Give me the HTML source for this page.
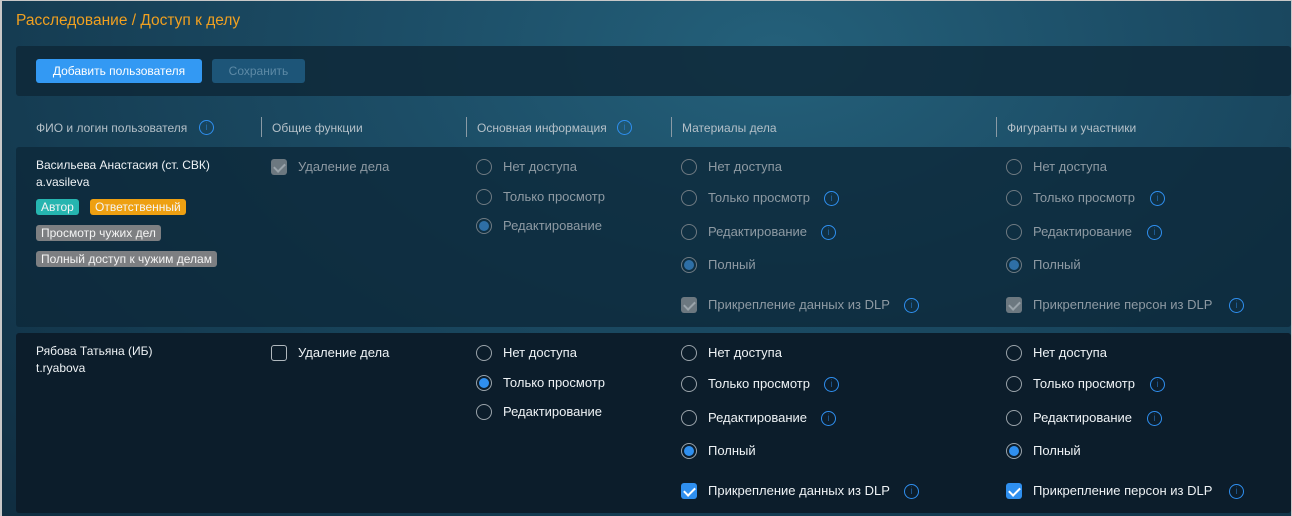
<!DOCTYPE html>
<html><head><meta charset="utf-8"><style>
*{margin:0;padding:0;box-sizing:border-box}
body{width:1292px;height:516px;overflow:hidden;font-family:"Liberation Sans",sans-serif;font-size:13px;position:relative;
background:radial-gradient(ellipse at 60% 10%,#24607a 0%,#1c4d66 35%,#153c52 70%,#102d40 100%);}
.frame{position:absolute;left:0;top:0;width:1292px;height:516px;border:1px solid #c8c8c8;border-bottom:none;border-left:2px solid #c8c8c8;pointer-events:none}
.a{position:absolute;white-space:nowrap}
.panel{position:absolute;left:16px;width:1275px;border-radius:3px}
.t{position:absolute;white-space:nowrap;line-height:16px}
.h{color:#b4c0c8;font-size:12px}
.d{color:#8e9aa3}
.w{color:#eef2f5}
.r{position:absolute;width:16px;height:16px;border-radius:50%;border:1.5px solid #9aa3aa}
.r.dim{border-color:#6f7a82}
.r.on::after{content:"";position:absolute;left:1.5px;top:1.5px;width:10px;height:10px;border-radius:50%;background:#2f8fef}
.r.dim.on::after{background:#2e6fa6}
.i{position:absolute;width:15px;height:15px;border-radius:50%;border:1.3px solid #2f8fef;color:#2f8fef;font-size:10px;line-height:13px;text-align:center;font-family:"DejaVu Sans",sans-serif;font-weight:200}
.vl{position:absolute;width:1px;height:20px;background:#8a9aa5;top:117px}
.cb{position:absolute;width:16px;height:16px;border-radius:3px;border:1.5px solid #b0b8be}
.cb.dis{background:#6c7880;border:none}
.cb.on{background:#2f8fef;border:none}
.cb.dis::after,.cb.on::after{content:"";position:absolute;left:5px;top:2px;width:5px;height:9px;border:solid #fff;border-width:0 2px 2px 0;transform:rotate(45deg)}
.cb.dis::after{border-color:#9aa4ab}
.tag{position:absolute;height:16px;line-height:16px;padding:0 5px;border-radius:3px;color:#f4f4f4;font-size:12px;white-space:nowrap}
</style></head><body>
<div class="t" style="left:16px;top:11px;font-size:15.5px;color:#f0a020;line-height:20px">Расследование / Доступ к делу</div>

<div class="panel" style="top:46px;height:50px;background:rgba(14,40,56,0.85)"></div>
<div class="a" style="left:36px;top:59px;width:166px;height:24px;background:#3399f3;border-radius:3px;color:#fff;font-size:12px;line-height:24px;text-align:center">Добавить пользователя</div>
<div class="a" style="left:212px;top:59px;width:93px;height:24px;background:#1d5578;border-radius:3px;color:#5d8aa6;font-size:12px;line-height:24px;text-align:center">Сохранить</div>

<div class="t h" style="left:36px;top:120px">ФИО и логин пользователя</div>
<div class="i" style="left:199px;top:120px">i</div>
<div class="vl" style="left:261px"></div>
<div class="t h" style="left:272px;top:120px">Общие функции</div>
<div class="vl" style="left:466px"></div>
<div class="t h" style="left:477px;top:120px">Основная информация</div>
<div class="i" style="left:617px;top:120px">i</div>
<div class="vl" style="left:671px"></div>
<div class="t h" style="left:682px;top:120px">Материалы дела</div>
<div class="vl" style="left:996px"></div>
<div class="t h" style="left:1007px;top:120px">Фигуранты и участники</div>

<!-- row 1 -->
<div class="panel" style="top:147px;height:180px;background:rgba(13,40,57,0.8)"></div>
<div class="t w" style="left:36px;top:157px;font-size:12px">Васильева Анастасия (ст. СВК)</div>
<div class="t w" style="left:36px;top:174px;font-size:12px">a.vasileva</div>
<div class="tag" style="left:36px;top:199px;background:#26b5b0">Автор</div>
<div class="tag" style="left:90px;top:199px;background:#eea012">Ответственный</div>
<div class="tag" style="left:36px;top:225px;background:#7d7f82">Просмотр чужих дел</div>
<div class="tag" style="left:36px;top:251px;background:#7d7f82">Полный доступ к чужим делам</div>

<div class="cb dis" style="left:271px;top:159px"></div>
<div class="t d" style="left:298px;top:159px">Удаление дела</div>

<div class="r dim" style="left:476px;top:159px"></div><div class="t d" style="left:503px;top:159px">Нет доступа</div>
<div class="r dim" style="left:476px;top:189px"></div><div class="t d" style="left:503px;top:189px">Только просмотр</div>
<div class="r dim on" style="left:476px;top:218px"></div><div class="t d" style="left:503px;top:218px">Редактирование</div>

<div class="r dim" style="left:681px;top:159px"></div><div class="t d" style="left:708px;top:159px">Нет доступа</div>
<div class="r dim" style="left:681px;top:190px"></div><div class="t d" style="left:708px;top:190px">Только просмотр</div><div class="i" style="left:824px;top:191px">i</div>
<div class="r dim" style="left:681px;top:224px"></div><div class="t d" style="left:708px;top:224px">Редактирование</div><div class="i" style="left:821px;top:225px">i</div>
<div class="r dim on" style="left:681px;top:257px"></div><div class="t d" style="left:708px;top:257px">Полный</div>
<div class="cb dis" style="left:681px;top:297px"></div><div class="t d" style="left:708px;top:297px">Прикрепление данных из DLP</div><div class="i" style="left:904px;top:298px">i</div>

<div class="r dim" style="left:1006px;top:159px"></div><div class="t d" style="left:1033px;top:159px">Нет доступа</div>
<div class="r dim" style="left:1006px;top:190px"></div><div class="t d" style="left:1033px;top:190px">Только просмотр</div><div class="i" style="left:1150px;top:191px">i</div>
<div class="r dim" style="left:1006px;top:224px"></div><div class="t d" style="left:1033px;top:224px">Редактирование</div><div class="i" style="left:1147px;top:225px">i</div>
<div class="r dim on" style="left:1006px;top:257px"></div><div class="t d" style="left:1033px;top:257px">Полный</div>
<div class="cb dis" style="left:1006px;top:297px"></div><div class="t d" style="left:1033px;top:297px">Прикрепление персон из DLP</div><div class="i" style="left:1229px;top:298px">i</div>

<!-- row 2 -->
<div class="panel" style="top:333px;height:180px;background:#0c1d2b"></div>
<div class="t w" style="left:36px;top:343px;font-size:12px">Рябова Татьяна (ИБ)</div>
<div class="t w" style="left:36px;top:360px;font-size:12px">t.ryabova</div>

<div class="cb" style="left:271px;top:345px"></div>
<div class="t w" style="left:298px;top:345px">Удаление дела</div>

<div class="r" style="left:476px;top:345px"></div><div class="t w" style="left:503px;top:345px">Нет доступа</div>
<div class="r on" style="left:476px;top:375px"></div><div class="t w" style="left:503px;top:375px">Только просмотр</div>
<div class="r" style="left:476px;top:404px"></div><div class="t w" style="left:503px;top:404px">Редактирование</div>

<div class="r" style="left:681px;top:345px"></div><div class="t w" style="left:708px;top:345px">Нет доступа</div>
<div class="r" style="left:681px;top:376px"></div><div class="t w" style="left:708px;top:376px">Только просмотр</div><div class="i" style="left:824px;top:377px">i</div>
<div class="r" style="left:681px;top:410px"></div><div class="t w" style="left:708px;top:410px">Редактирование</div><div class="i" style="left:821px;top:411px">i</div>
<div class="r on" style="left:681px;top:443px"></div><div class="t w" style="left:708px;top:443px">Полный</div>
<div class="cb on" style="left:681px;top:483px"></div><div class="t w" style="left:708px;top:483px">Прикрепление данных из DLP</div><div class="i" style="left:904px;top:484px">i</div>

<div class="r" style="left:1006px;top:345px"></div><div class="t w" style="left:1033px;top:345px">Нет доступа</div>
<div class="r" style="left:1006px;top:376px"></div><div class="t w" style="left:1033px;top:376px">Только просмотр</div><div class="i" style="left:1150px;top:377px">i</div>
<div class="r" style="left:1006px;top:410px"></div><div class="t w" style="left:1033px;top:410px">Редактирование</div><div class="i" style="left:1147px;top:411px">i</div>
<div class="r on" style="left:1006px;top:443px"></div><div class="t w" style="left:1033px;top:443px">Полный</div>
<div class="cb on" style="left:1006px;top:483px"></div><div class="t w" style="left:1033px;top:483px">Прикрепление персон из DLP</div><div class="i" style="left:1229px;top:484px">i</div>

<div class="frame"></div>
</body></html>
